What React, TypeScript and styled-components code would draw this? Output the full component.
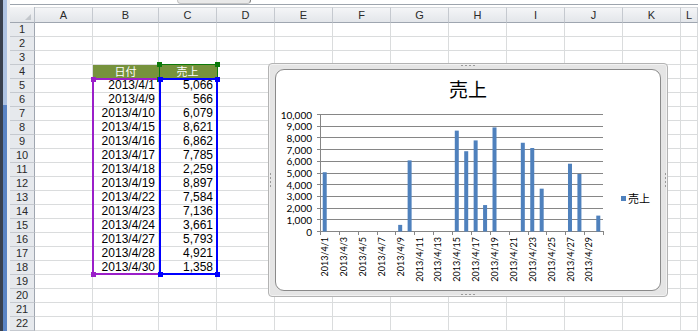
import React from 'react';
import styled, { createGlobalStyle } from 'styled-components';

const GlobalStyle = createGlobalStyle`
  html, body { margin: 0; padding: 0; background: #ffffff; overflow: hidden; }
  body { font-family: "Liberation Sans", "Noto Sans CJK JP", sans-serif; }
`;

const COLS = ['A', 'B', 'C', 'D', 'E', 'F', 'G', 'H', 'I', 'J', 'K', 'L'];
const ROWS = 22;

const sales: [number, number][] = [
  [1, 5066], [9, 566], [10, 6079], [15, 8621], [16, 6862], [17, 7785], [18, 2259],
  [19, 8897], [22, 7584], [23, 7136], [24, 3661], [27, 5793], [28, 4921], [30, 1358],
];

const fmt = (n: number) => n.toLocaleString('en-US');

const Page = styled.div`
  display: flex;
  width: 698px;
  height: 331px;
  overflow: hidden;
`;

const LeftFrame = styled.div`
  flex: none;
  width: 10px;
  background:
    linear-gradient(to right, #39414f 0 3px, transparent 3px 7px, #eceef1 7px),
    linear-gradient(to bottom, #aec3e3 0 105px, #5a84c5 105px);
`;

const Main = styled.div`
  flex: 1;
  display: flex;
  flex-direction: column;
  min-width: 0;
`;

const TopBar = styled.div`
  height: 4px;
  margin-bottom: 2px;
  border-bottom: 1px solid #9da4ad;
  display: flex;
`;

const FxStub = styled.div`
  margin-left: 167px;
  width: 72px;
  height: 3px;
  background: #e9e9e9;
  border: 1px solid #c4c4c4;
  border-top: none;
  border-right-color: #7d7d7d;
  border-radius: 0 0 8px 8px;
`;

const Sheet = styled.div`
  position: relative;
  display: grid;
  grid-template-columns: 25px 58px 66px repeat(9, 58px) 1fr;
  grid-template-rows: 16px repeat(${ROWS}, 14px);
`;

const Corner = styled.div`
  position: relative;
  box-sizing: border-box;
  background: linear-gradient(#f3f4f6, #e2e5e9);
  border-right: 1px solid #b9bfc7;
  border-bottom: 1px solid #9fa6b0;
  &::after {
    content: '';
    position: absolute;
    right: 3px;
    bottom: 2px;
    border-left: 6px solid transparent;
    border-bottom: 6px solid #c3c7cc;
  }
`;

const ColHead = styled.div`
  box-sizing: border-box;
  background: linear-gradient(#f4f5f7, #e3e6ea);
  border-right: 1px solid #c5c9cf;
  border-bottom: 1px solid #9fa6b0;
  border-top: 1px solid #d6d9dd;
  font-size: 11px;
  line-height: 14px;
  color: #2a2a2a;
  text-align: center;
`;

const RowHead = styled.div`
  box-sizing: border-box;
  background: #e6e9ed;
  border-right: 1px solid #9fa6b0;
  border-bottom: 1px solid #c5c9cf;
  font-size: 11px;
  line-height: 13px;
  color: #2a2a2a;
  text-align: center;
`;

const Cell = styled.div<{ $head?: boolean }>`
  box-sizing: border-box;
  border-right: 1px solid ${p => (p.$head ? '#76923c' : '#dadcdd')};
  border-bottom: 1px solid ${p => (p.$head ? '#76923c' : '#dadcdd')};
  background: ${p => (p.$head ? '#76923c' : '#ffffff')};
  color: ${p => (p.$head ? '#ffffff' : '#000000')};
  text-align: ${p => (p.$head ? 'center' : 'right')};
  padding-right: ${p => (p.$head ? '0' : '3px')};
  font-family: ${p => (p.$head ? '"Noto Sans CJK JP", sans-serif' : '"Liberation Sans", sans-serif')};
  font-size: ${p => (p.$head ? '11px' : '12px')};
  line-height: 13px;
  white-space: nowrap;
`;

const Range = styled.div<{ $color: string; $w: number }>`
  position: absolute;
  box-sizing: border-box;
  border: ${p => p.$w}px solid ${p => p.$color};
  pointer-events: none;
`;

type CornerPos = 'tl' | 'tr' | 'bl' | 'br';

const Handle = styled.div<{ $color: string; $at: CornerPos; $off: number }>`
  position: absolute;
  width: 5px;
  height: 5px;
  background: ${p => p.$color};
  ${p => (p.$at[0] === 't' ? 'top' : 'bottom')}: ${p => p.$off}px;
  ${p => (p.$at[1] === 'l' ? 'left' : 'right')}: ${p => p.$off}px;
`;

const GRIP = 'repeating-linear-gradient(to right, #9a9a9a 0 2px, transparent 2px 4px)';
const GRIP_V = 'repeating-linear-gradient(to bottom, #9a9a9a 0 2px, transparent 2px 4px)';

const ChartFrame = styled.div`
  position: absolute;
  left: 258px;
  top: 56px;
  width: 400px;
  height: 234px;
  box-sizing: border-box;
  padding: 5px 6px;
  border: 1px solid #b3b3b3;
  border-radius: 4px;
  background:
    ${GRIP} 50% 0 / 15px 2px no-repeat,
    ${GRIP} 50% 100% / 15px 2px no-repeat,
    ${GRIP_V} 0 50% / 2px 15px no-repeat,
    ${GRIP_V} 100% 50% / 2px 15px no-repeat,
    #e5e5e5;
  box-shadow: inset 0 0 0 1px #f2f2f2;
`;

const ChartArea = styled.div`
  height: 100%;
  box-sizing: border-box;
  border: 1px solid #8a8a8a;
  border-radius: 9px;
  background: #ffffff;
  display: flex;
  flex-direction: column;
  overflow: hidden;
`;

const Title = styled.div`
  height: 36px;
  line-height: 38px;
  text-align: center;
  font-family: "Noto Sans CJK JP", sans-serif;
  font-size: 19px;
  color: #000;
`;

const PlotRow = styled.div`
  flex: 1;
  display: flex;
`;

const Legend = styled.div`
  display: flex;
  align-items: center;
  gap: 2px;
  margin-left: 9px;
  font-family: "Noto Sans CJK JP", sans-serif;
  font-size: 11px;
  color: #000;
`;

const LegendKey = styled.span`
  width: 5px;
  height: 5px;
  background: #4f81bd;
`;

// sheet origin is page (10, 7)
const ox = 10;
const oy = 7;

const Plot = () => {
  const X0 = 44;
  const X1 = 327;
  const Y1 = 125;
  const step = 11.7;
  const cw = (X1 - X0) / 30;
  const grid = Array.from({ length: 11 }, (_, i) => i);
  return (
    <svg width={336} height={184} style={{ flex: 'none', display: 'block' }}>
      <g stroke="#868686" strokeWidth={1} shapeRendering="crispEdges">
        {grid.map(i => {
          const y = Math.round(Y1 - i * step) + 0.5;
          return <line key={i} x1={X0 - 3} x2={X1} y1={y} y2={y} />;
        })}
        <line x1={X0 + 0.5} x2={X0 + 0.5} y1={Math.round(Y1 - 10 * step)} y2={Y1 + 1} />
        {Array.from({ length: 16 }, (_, k) => {
          const x = Math.round(X0 + k * 2 * cw) + 0.5;
          return <line key={k} x1={x} x2={x} y1={Y1} y2={Y1 + 4} />;
        })}
      </g>
      {sales.map(([d, v]) => {
        const cx = X0 + (d - 0.5) * cw;
        const h = (v / 10000) * step * 10;
        return <rect key={d} x={cx - 2} y={Y1 - h + 0.5} width={4} height={h} fill="#4f81bd" />;
      })}
      <g fontFamily="Lato, 'Liberation Sans', sans-serif" fill="#000">
        {grid.map(i => (
          <text
            key={i}
            x={36}
            y={Y1 - i * step + 0.5}
            fontSize={10}
            textAnchor="end"
            dominantBaseline="central"
          >
            {fmt(i * 1000)}
          </text>
        ))}
        {Array.from({ length: 15 }, (_, k) => {
          const day = k * 2 + 1;
          const cx = X0 + (day - 0.5) * cw;
          return (
            <text
              key={day}
              fontSize={9}
              textAnchor="end"
              dominantBaseline="central"
              transform={`translate(${cx.toFixed(1)}, ${Y1 + 6}) rotate(-90)`}
            >
              {`2013/4/${day}`}
            </text>
          );
        })}
      </g>
    </svg>
  );
};

const CORNERS: CornerPos[] = ['tl', 'tr', 'bl', 'br'];

const Handles = ({ color, off }: { color: string; off: number }) => (
  <>
    {CORNERS.map(c => (
      <Handle key={c} $color={color} $at={c} $off={off} />
    ))}
  </>
);

export default function App() {
  const cells: React.ReactNode[] = [];
  cells.push(<Corner key="corner" />);
  COLS.forEach(c => cells.push(<ColHead key={`h${c}`}>{c}</ColHead>));
  for (let r = 1; r <= ROWS; r++) {
    cells.push(<RowHead key={`r${r}`}>{r}</RowHead>);
    COLS.forEach(c => {
      let content: React.ReactNode = null;
      let head = false;
      if (r === 4 && c === 'B') { content = '日付'; head = true; }
      if (r === 4 && c === 'C') { content = '売上'; head = true; }
      const item = r >= 5 && r <= 18 ? sales[r - 5] : undefined;
      if (item && c === 'B') content = `2013/4/${item[0]}`;
      if (item && c === 'C') content = fmt(item[1]);
      cells.push(<Cell key={`${c}${r}`} $head={head}>{content}</Cell>);
    });
  }

  return (
    <>
      <GlobalStyle />
      <Page>
        <LeftFrame />
        <Main>
          <TopBar>
            <FxStub />
          </TopBar>
          <Sheet>
            {cells}
            <Range $color="#9b1fc9" $w={2} style={{ left: 92 - ox, top: 78 - oy, width: 69, height: 197 }}>
              <Handles color="#9b1fc9" off={-3.5} />
            </Range>
            <Range $color="#0b7a0b" $w={1} style={{ left: 159 - ox, top: 64 - oy, width: 59, height: 16 }}>
              <Handles color="#0b7a0b" off={-3} />
            </Range>
            <Range $color="#0000ff" $w={2} style={{ left: 159 - ox, top: 78 - oy, width: 59, height: 197 }}>
              <Handles color="#0000ff" off={-3.5} />
            </Range>
            <ChartFrame>
              <ChartArea>
                <Title>売上</Title>
                <PlotRow>
                  <Plot />
                  <Legend>
                    <LegendKey />
                    <span>売上</span>
                  </Legend>
                </PlotRow>
              </ChartArea>
            </ChartFrame>
          </Sheet>
        </Main>
      </Page>
    </>
  );
}
